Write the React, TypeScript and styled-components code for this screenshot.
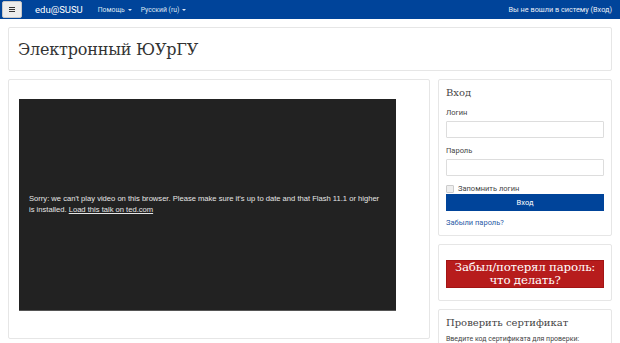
import styled, { createGlobalStyle } from "styled-components";

const GlobalStyle = createGlobalStyle`
  html, body {
    margin: 0;
    padding: 0;
    background: #fff;
    font-family: Roboto, "Liberation Sans", sans-serif;
    overflow: hidden;
  }
  * {
    box-sizing: border-box;
  }
`;

const Navbar = styled.header`
  height: 19px;
  background-color: #00449a;
  display: flex;
  align-items: center;
  padding: 0 8px 0 2px;
  color: #fff;
`;

const Toggle = styled.button`
  width: 20px;
  height: 17px;
  padding: 0;
  border: 1px solid #c8c8c8;
  border-radius: 2px;
  background-color: #ececec;
  display: flex;
  flex-direction: column;
  align-items: center;
  justify-content: center;
  gap: 1px;
  span {
    display: block;
    width: 6px;
    height: 1px;
    background: #333;
  }
`;

const Brand = styled.a`
  margin-left: 13px;
  font-size: 9.5px;
  color: #fff;
  text-decoration: none;
`;

const NavMenu = styled.nav`
  display: flex;
  gap: 9px;
  margin-left: 15px;
`;

const NavItem = styled.span`
  font-size: 6.8px;
  color: #dde6f3;
  &::after {
    content: "";
    display: inline-block;
    margin-left: 3px;
    vertical-align: 1px;
    border-left: 2px solid transparent;
    border-right: 2px solid transparent;
    border-top: 2.5px solid #dde6f3;
  }
`;

const LoginInfo = styled.span`
  margin-left: auto;
  font-size: 7.3px;
  color: #e8eef7;
`;

const Page = styled.main`
  padding: 8px 8px 0;
  display: flex;
  flex-direction: column;
  gap: 8px;
`;

const Card = styled.section<{ pad?: string }>`
  background: #fff;
  border: 1px solid #e6e6e6;
  border-radius: 2px;
  padding: ${(p) => p.pad || "8px"};
`;

const HeaderCard = styled(Card)`
  height: 44px;
  display: flex;
  align-items: center;
`;

const SiteTitle = styled.h1`
  margin: 0;
  font-family: "DejaVu Serif", "Liberation Serif", serif;
  font-weight: normal;
  font-size: 16px;
  color: #333;
  letter-spacing: -0.2px;
`;

const Columns = styled.div`
  display: grid;
  grid-template-columns: 422px 174px;
  gap: 8px;
  align-items: start;
`;

const MainCard = styled(Card)`
  height: 260px;
`;

const Video = styled.div`
  width: 377px;
  height: 212px;
  background: #222;
  border-bottom: 1px solid #555;
  display: flex;
  align-items: center;
  padding: 0 10px;
`;

const VideoText = styled.p`
  margin: 0;
  font-family: "Liberation Sans", Arial, sans-serif;
  font-size: 7.6px;
  line-height: 10.5px;
  color: #e6e6e6;
  a {
    color: #e6e6e6;
    text-decoration: underline;
  }
`;

const Side = styled.aside`
  display: flex;
  flex-direction: column;
  gap: 8px;
`;

const BlockTitle = styled.h2`
  margin: 0;
  font-family: "DejaVu Serif", "Liberation Serif", serif;
  font-weight: normal;
  font-size: 10px;
  line-height: 13px;
  color: #444;
`;

const Label = styled.label<{ first?: boolean }>`
  display: block;
  font-size: 7.5px;
  line-height: 10px;
  color: #444;
  margin: ${(p) => (p.first ? "9px" : "8px")} 0 3px;
`;

const Input = styled.div`
  height: 17px;
  border: 1px solid #ddd;
  border-radius: 1px;
  background: #fff;
`;

const Remember = styled.div`
  display: flex;
  align-items: center;
  gap: 4px;
  margin-top: 8px;
  font-size: 7.5px;
  line-height: 9px;
  color: #444;
  &::before {
    content: "";
    width: 6px;
    height: 6px;
    border: 1px solid #ccc;
    background: #eee;
    border-radius: 1px;
  }
`;

const LoginButton = styled.button`
  display: block;
  width: 100%;
  height: 17px;
  margin-top: 1px;
  border: none;
  background: #00449a;
  color: #fff;
  font-family: Roboto, "Liberation Sans", sans-serif;
  font-size: 7.5px;
`;

const Forgot = styled.a`
  display: block;
  margin-top: 7px;
  font-size: 7.5px;
  line-height: 9px;
  color: #2b5aa6;
  text-decoration: none;
`;

const Promo = styled.div`
  height: 28px;
  background: #b71c1c;
  border: 1px solid #a31414;
  color: #fff;
  font-family: "DejaVu Serif", "Liberation Serif", serif;
  font-size: 11.8px;
  line-height: 13px;
  letter-spacing: -0.2px;
  white-space: nowrap;
  text-align: center;
  display: flex;
  flex-direction: column;
  justify-content: center;
`;

const Hint = styled.p`
  margin: 6px 0 0;
  font-size: 7px;
  color: #444;
`;

export default function App() {
  return (
    <>
      <GlobalStyle />
      <Navbar>
        <Toggle aria-label="menu">
          <span />
          <span />
          <span />
        </Toggle>
        <Brand href="#">edu@SUSU</Brand>
        <NavMenu>
          <NavItem>Помощь</NavItem>
          <NavItem>Русский (ru)</NavItem>
        </NavMenu>
        <LoginInfo>Вы не вошли в систему (Вход)</LoginInfo>
      </Navbar>
      <Page>
        <HeaderCard pad="0 9px">
          <SiteTitle>Электронный ЮУрГУ</SiteTitle>
        </HeaderCard>
        <Columns>
          <MainCard pad="19px 10px">
            <Video>
              <VideoText>
                Sorry: we can't play video on this browser. Please make sure it's up to date and that Flash 11.1 or higher is installed.{" "}
                <a href="#">Load this talk on ted.com</a>
              </VideoText>
            </Video>
          </MainCard>
          <Side>
            <Card pad="6px 7px 8px">
              <BlockTitle>Вход</BlockTitle>
              <Label first>Логин</Label>
              <Input />
              <Label>Пароль</Label>
              <Input />
              <Remember>Запомнить логин</Remember>
              <LoginButton>Вход</LoginButton>
              <Forgot href="#">Забыли пароль?</Forgot>
            </Card>
            <Card pad="15px 7px 12px">
              <Promo>
                <span>Забыл/потерял пароль:</span>
                <span>что делать?</span>
              </Promo>
            </Card>
            <Card pad="6px 7px 8px">
              <BlockTitle>Проверить сертификат</BlockTitle>
              <Hint>Введите код сертификата для проверки:</Hint>
            </Card>
          </Side>
        </Columns>
      </Page>
    </>
  );
}
